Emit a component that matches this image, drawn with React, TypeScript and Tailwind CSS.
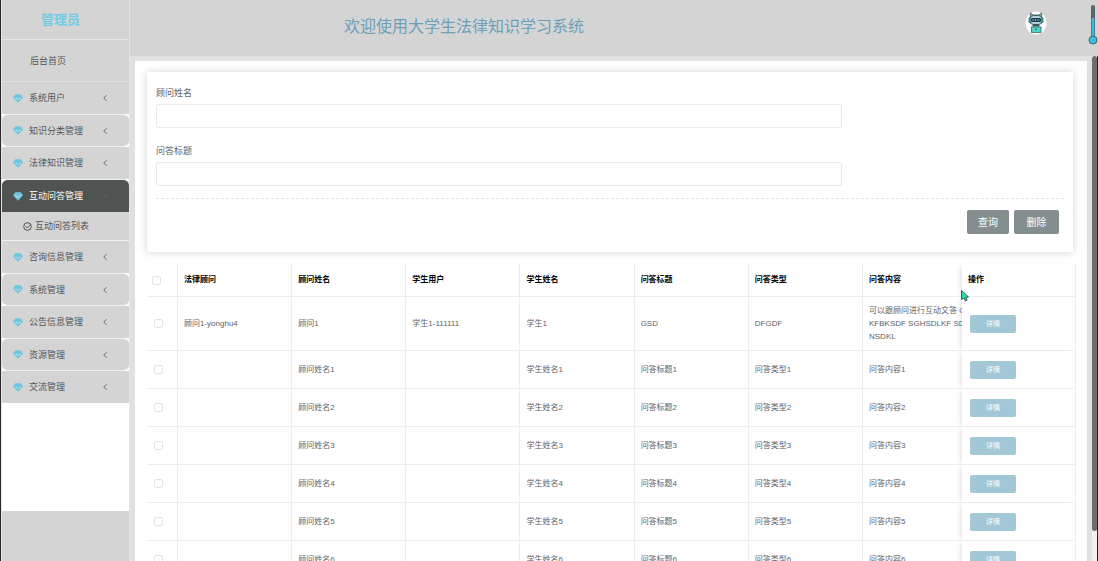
import { ReactNode } from "react";
import { ChevronDown, ChevronLeft } from "lucide-react";

const menus = [
  { name: "系统用户" },
  { name: "知识分类管理", rounded: true },
  { name: "法律知识管理" },
  { name: "互动问答管理", rounded: true, children: ["互动问答列表"] },
  { name: "咨询信息管理" },
  { name: "系统管理", rounded: true },
  { name: "公告信息管理" },
  { name: "资源管理", rounded: true },
  { name: "交流管理" },
];

const columns = ["法律顾问", "顾问姓名", "学生用户", "学生姓名", "问答标题", "问答类型"];

const firstRow = {
  cells: ["顾问1-yonghu4", "顾问1", "学生1-111111", "学生1", "GSD", "DFGDF"],
  content: ["可以跟顾问进行互动文答 G", "KFBKSDF SGHSDLKF SDF", "NSDKL"],
};

const rows = [
  firstRow,
  ...[1, 2, 3, 4, 5, 6].map((n) => ({
    cells: ["", `顾问姓名${n}`, "", `学生姓名${n}`, `问答标题${n}`, `问答类型${n}`],
    content: [`问答内容${n}`],
  })),
];

function GemIcon() {
  return (
    <svg viewBox="0 0 20 18" className="h-[9px] w-[10px] shrink-0" aria-hidden="true">
      <path d="M4.5 0.500h11L20 6.500 10 17.500 0 6.500z" fill="#6cc6e0" />
      <path d="M5 6.500l5 5 5-5" fill="none" stroke="#d0e2e8" strokeWidth="2" />
    </svg>
  );
}

function CheckIcon() {
  return (
    <svg viewBox="0 0 18 18" className="size-[9px] shrink-0" fill="none" stroke="#333" strokeWidth="1.6" aria-hidden="true">
      <circle cx="9" cy="9" r="7.6" />
      <path d="M5 8.500l3.500 3.500L15 5" />
    </svg>
  );
}

// 头像：戴耳机的小机器人
function Avatar() {
  return (
    <svg viewBox="0 0 44 48" className="h-6 w-[22px]" role="img" aria-label="头像">
      <ellipse cx="22" cy="24" rx="21" ry="23" fill="#fff" />
      <path d="M11 4l5 4h12l5-4 1 9H10z" fill="#8fb9bd" stroke="#27464d" strokeWidth="1.5" />
      <rect x="10" y="9" width="24" height="18" rx="7" fill="#b4d2d6" stroke="#3a6067" strokeWidth="2" />
      <rect x="12" y="14" width="20" height="8" rx="2" fill="#24404e" />
      <path d="M14 18h4m3-2v4m3-2h5" stroke="#6fb6c4" strokeWidth="2" />
      <rect x="7" y="13" width="4" height="11" rx="2" fill="#2f8f92" />
      <rect x="33" y="13" width="4" height="11" rx="2" fill="#2f8f92" />
      <path d="M15 27h14v4H15z" fill="#35545b" />
      <rect x="13" y="32" width="19" height="11" fill="#4fd6c6" stroke="#27665f" strokeWidth="1.5" />
      <circle cx="22" cy="37" r="1.5" fill="#1d5a58" />
    </svg>
  );
}

function Sidebar() {
  return (
    <aside className="flex w-[129px] shrink-0 flex-col border-x border-[#e4e4e4] bg-[#d4d4d4] text-[9px] text-[#555]">
      <h1 className="flex h-10 items-center justify-center border-b border-[#e6e6e6] pr-[10px] text-[13px] font-bold text-[#72cbe5]">
        管理员
      </h1>
      <a href="#home" className="flex h-[42px] items-center border-b border-[#e0e0e0] pt-[2px] pl-7">
        后台首页
      </a>
      <ul className="bg-white">
        {menus.map((menu) => (
          <li key={menu.name}>
            <button
              type="button"
              className={`flex w-full items-center pr-[19px] pl-[11px] ${
                menu.children
                  ? "h-[33px] rounded-t-md border-t border-[#f0f0f0] bg-[#4f5452] text-white"
                  : menu.rounded
                    ? "h-[33px] rounded-md border-y border-[#f0f0f0] bg-[#d4d4d4]"
                    : "h-8 bg-[#d4d4d4]"
              }`}
            >
              <GemIcon />
              <span className="ml-[6px] flex-1 pt-[2px] text-left">{menu.name}</span>
              {menu.children ? (
                <ChevronDown size={9} className="text-[#646967]" />
              ) : (
                <ChevronLeft size={10} />
              )}
            </button>
            {menu.children?.map((child) => (
              <a
                key={child}
                href="#list"
                className="flex h-[29px] items-center gap-[3px] border-b border-[#eef4f4] bg-[#d4d4d4] pl-[21px]"
              >
                <CheckIcon />
                <span className="pt-[2px]">{child}</span>
              </a>
            ))}
          </li>
        ))}
      </ul>
      <div className="h-[108px] bg-white" />
    </aside>
  );
}

function Field({ id, label }: { id: string; label: string }) {
  return (
    <div>
      <label htmlFor={id} className="block h-5 pt-px text-[9px] leading-4 text-[#606266]">
        {label}
      </label>
      <input
        id={id}
        type="text"
        className="block h-6 w-[75.5%] rounded-xs border border-[#e8eaea] px-2 text-[9px] outline-none"
      />
    </div>
  );
}

function SearchForm() {
  return (
    <form className="mr-[3px] bg-white px-[9px] pt-3 pb-[18px] shadow-[0_0_8px_rgba(0,0,0,0.18)]">
      <div className="flex flex-col gap-[14px] pb-3">
        <Field id="name" label="顾问姓名" />
        <Field id="title" label="问答标题" />
      </div>
      <div className="flex justify-end gap-[5px] border-t border-dashed border-[#e4e4dc] pt-[11px] pr-[5px]">
        <button type="button" className="h-6 w-[42px] rounded-xs bg-[#848e8e] text-[10px] text-white">
          查询
        </button>
        <button type="button" className="h-6 w-[45px] rounded-xs bg-[#848e8e] text-[10px] text-white">
          删除
        </button>
      </div>
    </form>
  );
}

function Check({ label }: { label: string }) {
  return (
    <input
      type="checkbox"
      aria-label={label}
      className="block size-[9px] appearance-none rounded-xs border border-[#e2e5e7] bg-white"
    />
  );
}

function Cell({ children }: { children?: ReactNode }) {
  return <td className="border-r border-b border-[#ebeeee] px-[6px]">{children}</td>;
}

function DataTable() {
  return (
    <table className="mt-3 w-full table-fixed border-separate border-spacing-0 text-[8px] text-[#606266]">
      <colgroup>
        <col className="w-[31px]" />
        {columns.map((c) => (
          <col key={c} />
        ))}
        <col className="w-[99px]" />
        <col className="w-[114px]" />
      </colgroup>
      <thead>
        <tr className="h-[33px] text-left text-black">
          <th className="border-r border-b border-[#ebeeee] pl-[5px]">
            <Check label="全选" />
          </th>
          {columns.map((c) => (
            <th key={c} className="border-r border-b border-[#ebeeee] px-[6px] font-bold">
              {c}
            </th>
          ))}
          <th className="border-b border-[#ebeeee] px-[6px] font-bold">问答内容</th>
          <th className="border-r border-b border-[#ebeeee] bg-white px-[6px] font-bold shadow-[-4px_0_4px_-2px_rgba(0,0,0,0.1)]">
            操作
          </th>
        </tr>
      </thead>
      <tbody>
        {rows.map((row, i) => (
          <tr key={i} className={i === 0 ? "h-[54px]" : "h-[38px]"}>
            <td className="border-r border-b border-[#ebeeee] pl-[7px]">
              <Check label={`选择第${i + 1}行`} />
            </td>
            {row.cells.map((text, j) => (
              <Cell key={j}>{text}</Cell>
            ))}
            <td className="overflow-hidden border-b border-[#ebeeee] pl-[6px] leading-[13px] whitespace-nowrap">
              {row.content.map((line) => (
                <div key={line}>{line}</div>
              ))}
            </td>
            <td className="border-r border-b border-[#ebeeee] bg-white pl-2 shadow-[-4px_0_4px_-2px_rgba(0,0,0,0.1)]">
              <button
                type="button"
                className="block h-[18px] w-[46px] rounded-xs bg-[#a2c8d8] pt-px text-[7px] text-white"
              >
                详情
              </button>
            </td>
          </tr>
        ))}
      </tbody>
    </table>
  );
}

export default function App() {
  return (
    <div className="relative flex h-screen overflow-hidden border-l border-[#2b2b2e] bg-[#e0e0e0] font-['Liberation_Sans','Noto_Sans_CJK_SC',sans-serif]">
      <Sidebar />
      <div className="flex min-w-0 flex-1 flex-col">
        <header className="flex h-14 shrink-0 items-center justify-between bg-[#d4d4d4] pr-[51px] pb-[2px] pl-[214px]">
          <h2 className="text-base text-[#6b9fb8]">欢迎使用大学生法律知识学习系统</h2>
          <div className="pb-2">
            <Avatar />
          </div>
        </header>
        <div className="flex min-h-0 flex-1">
          <main className="mt-[5px] mr-[5px] ml-[5px] min-w-0 flex-1 overflow-hidden bg-white pt-[11px] pr-[11px] pl-3">
            <SearchForm />
            <DataTable />
          </main>
          {/* 滚动条 */}
          <div className="w-[6px] border-r border-[#222] bg-[#f0f0f0]">
            <div className="h-[94%] rounded-full bg-[#6e6e6e]" />
          </div>
        </div>
      </div>

      {/* 右上角温度计 */}
      <svg viewBox="0 0 10 42" className="absolute top-1 right-0 h-[42px] w-[10px]" aria-hidden="true">
        <rect x="3" y="1" width="4" height="36" rx="2" fill="#56676e" />
        <rect x="3.800" y="14" width="2.400" height="22" fill="#35c0e4" />
        <circle cx="5" cy="36" r="4" fill="#35c0e4" stroke="#4b6670" />
      </svg>
      {/* 鼠标指针 */}
      <svg viewBox="0 0 8 12" className="absolute top-[290px] left-[960px] h-3 w-2" aria-hidden="true">
        <path d="M.5.5v9L3 8l1.500 3 1.500-.8L4.800 7.300 7.500 7z" fill="#25e0a4" stroke="#234" strokeWidth=".8" />
      </svg>
    </div>
  );
}
